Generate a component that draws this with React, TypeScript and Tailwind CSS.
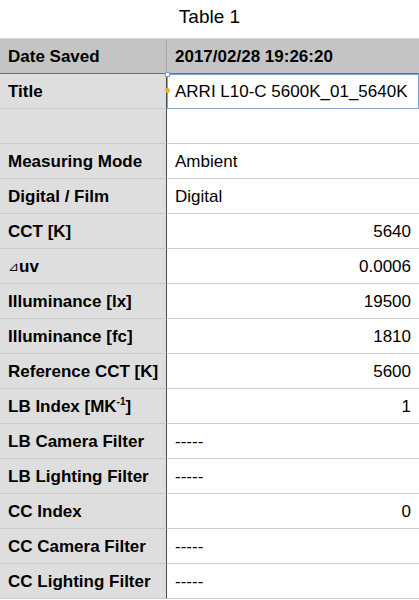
const ROWS: { label: React.ReactNode; value: string; align?: 'right' }[] = [
  { label: 'Measuring Mode', value: 'Ambient' },
  { label: 'Digital / Film', value: 'Digital' },
  { label: 'CCT [K]', value: '5640', align: 'right' },
  {
    label: (
      <>
        <span className="text-[13px] font-normal">⊿</span>uv
      </>
    ),
    value: '0.0006',
    align: 'right',
  },
  { label: 'Illuminance [lx]', value: '19500', align: 'right' },
  { label: 'Illuminance [fc]', value: '1810', align: 'right' },
  { label: 'Reference CCT [K]', value: '5600', align: 'right' },
  {
    label: (
      <>
        LB Index [MK<sup className="text-[10px]">-1</sup>]
      </>
    ),
    value: '1',
    align: 'right',
  },
  { label: 'LB Camera Filter', value: '-----' },
  { label: 'LB Lighting Filter', value: '-----' },
  { label: 'CC Index', value: '0', align: 'right' },
  { label: 'CC Camera Filter', value: '-----' },
  { label: 'CC Lighting Filter', value: '-----' },
];

export default function App() {
  return (
    <div className="h-[600px] w-[419px] overflow-hidden bg-white font-['Liberation_Sans',Arial,sans-serif] text-black">
      <div className="flex h-[38px] items-center justify-center pb-[3px] text-[19px]">Table 1</div>

      <div className="grid grid-cols-[167px_1fr] border-t border-[#d6d6d6]">
        {/* header */}
        <div className="flex h-[35px] items-center border-r border-b border-[#a9a9a9] border-b-[#6e6e6e] bg-[#c4c4c4] pl-[8px] pt-[1px] text-[17px] font-bold">
          Date Saved
        </div>
        <div className="flex h-[35px] items-center border-b border-[#6e6e6e] bg-[#c4c4c4] pl-[8px] pt-[1px] text-[17px] font-bold">
          2017/02/28 19:26:20
        </div>

        {/* title row (selected) */}
        <div className="flex h-[35px] items-center border-r border-b border-[#c9c9c9] border-r-[#4a4a4a] bg-[#dedede] pl-[8px] pt-[1px] text-[17px] font-bold">
          Title
        </div>
        <div className="relative flex h-[35px] items-center border border-[#7fa3d6] bg-white pl-[7px] pt-[1px] text-[17px]">
          ARRI L10-C 5600K_01_5640K
          <span className="absolute -left-[3px] -top-[3px] h-[5px] w-[5px] border border-[#7fa3d6] bg-white" />
          <span className="absolute -left-[3px] top-[13px] h-[5px] w-[5px] rounded-full bg-[#f0b030]" />
        </div>

        {/* empty row */}
        <div className="h-[35px] border-r border-b border-[#c9c9c9] border-r-[#4a4a4a] bg-[#dedede]" />
        <div className="h-[35px] border-b border-[#d0d0d0] bg-white" />

        {ROWS.map((row, i) => (
          <div key={i} className="contents">
            <div className="flex h-[35px] items-center border-r border-b border-[#c9c9c9] border-r-[#4a4a4a] bg-[#dedede] pl-[8px] pt-[1px] text-[17px] font-bold whitespace-nowrap">
              {row.label}
            </div>
            <div
              className={
                row.align === 'right'
                  ? 'flex h-[35px] items-center justify-end border-b border-[#d0d0d0] bg-white pt-[1px] pr-[8px] text-[17px]'
                  : 'flex h-[35px] items-center border-b border-[#d0d0d0] bg-white pt-[1px] pl-[8px] text-[17px]'
              }
            >
              {row.value}
            </div>
          </div>
        ))}
      </div>
    </div>
  );
}
